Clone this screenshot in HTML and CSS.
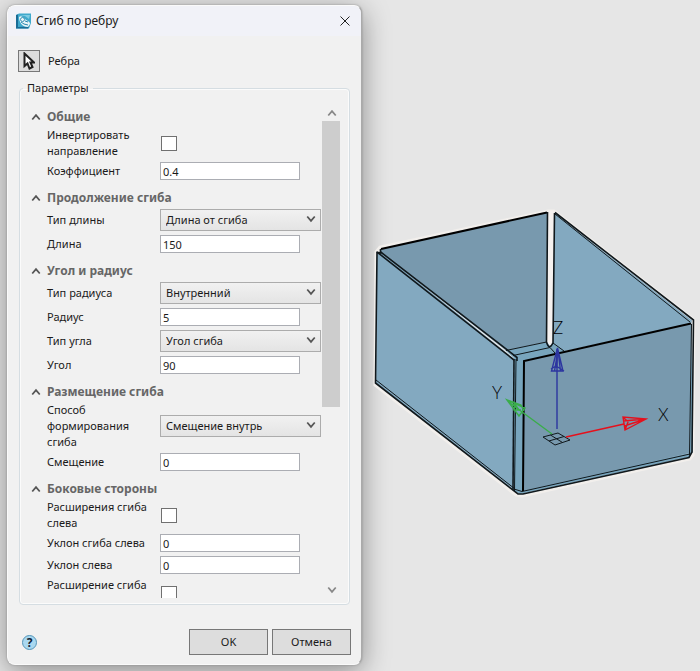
FILE: index.html
```html
<!DOCTYPE html>
<html lang="ru">
<head>
<meta charset="utf-8">
<title>Сгиб по ребру</title>
<link rel="stylesheet" href="styles.css">
</head>
<body>
<main class="workspace">
  <form class="dialog">
    <header class="titlebar">
      <svg class="app-icon" viewBox="0 0 15 16" aria-hidden="true">
        <path d="M0 2L3 .5H15V10L13 15.500H0Z" fill="#3fa9cc"/>
        <path d="M0 2L2 1.500V14L13 13.500L12 15.500H0Z" fill="#1a6c96"/>
        <path d="M3 2H14L13 6L9 3Z" fill="#7fcbe2"/>
        <path d="M3 4C5 2 7 4 9 6S14 8 14 11L12 14C6 14 3 9 3 4Z" fill="#e9f5f8"/>
        <circle cx="6.500" cy="6.500" r="2" fill="none" stroke="#3d92b5"/>
        <path d="M5 9L8 11L12 12M9 8L12 9" stroke="#2786ae" fill="none"/>
      </svg>
      <h1 class="title">Сгиб по ребру</h1>
      <button class="close" type="button" aria-label="Закрыть">
        <svg viewBox="0 0 10 10"><path d="M.5.5L9.500 9.500M9.500.5L.5 9.500"/></svg>
      </button>
    </header>

    <div class="picker">
      <button class="pick" type="button" id="pick" aria-label="Ребра">
        <svg viewBox="0 0 12 18"><path d="M1.500 1.500V14L4.500 11.500L6.500 16.500L9.500 15L7.500 10.500H11Z"/></svg>
      </button>
      <label for="pick">Ребра</label>
    </div>

    <fieldset class="params">
      <legend>Параметры</legend>
      <div class="list">
        <section class="group">
          <button class="group-head" type="button"><svg class="chev" viewBox="0 0 8 6"><path d="M1 5L4 1.500L7 5"/></svg>Общие</button>
          <div class="row"><label for="inv">Инвертировать направление</label><input class="check" type="checkbox" id="inv"></div>
          <div class="row"><label for="coef">Коэффициент</label><input class="text" type="text" id="coef" value="0.4"></div>
        </section>
        <section class="group">
          <button class="group-head" type="button"><svg class="chev" viewBox="0 0 8 6"><path d="M1 5L4 1.500L7 5"/></svg>Продолжение сгиба</button>
          <div class="row"><label for="lt">Тип длины</label><span class="combo"><select id="lt"><option>Длина от сгиба</option></select><svg class="chev" viewBox="0 0 8 6"><path d="M1 1L4 4.500L7 1"/></svg></span></div>
          <div class="row"><label for="len">Длина</label><input class="text" type="text" id="len" value="150"></div>
        </section>
        <section class="group">
          <button class="group-head" type="button"><svg class="chev" viewBox="0 0 8 6"><path d="M1 5L4 1.500L7 5"/></svg>Угол и радиус</button>
          <div class="row"><label for="rt">Тип радиуса</label><span class="combo"><select id="rt"><option>Внутренний</option></select><svg class="chev" viewBox="0 0 8 6"><path d="M1 1L4 4.500L7 1"/></svg></span></div>
          <div class="row"><label for="rad">Радиус</label><input class="text" type="text" id="rad" value="5"></div>
          <div class="row"><label for="at">Тип угла</label><span class="combo"><select id="at"><option>Угол сгиба</option></select><svg class="chev" viewBox="0 0 8 6"><path d="M1 1L4 4.500L7 1"/></svg></span></div>
          <div class="row"><label for="ang">Угол</label><input class="text" type="text" id="ang" value="90"></div>
        </section>
        <section class="group">
          <button class="group-head" type="button"><svg class="chev" viewBox="0 0 8 6"><path d="M1 5L4 1.500L7 5"/></svg>Размещение сгиба</button>
          <div class="row"><label for="fm">Способ формирования сгиба</label><span class="combo"><select id="fm"><option>Смещение внутрь</option></select><svg class="chev" viewBox="0 0 8 6"><path d="M1 1L4 4.500L7 1"/></svg></span></div>
          <div class="row"><label for="off">Смещение</label><input class="text" type="text" id="off" value="0"></div>
        </section>
        <section class="group">
          <button class="group-head" type="button"><svg class="chev" viewBox="0 0 8 6"><path d="M1 5L4 1.500L7 5"/></svg>Боковые стороны</button>
          <div class="row"><label for="el">Расширения сгиба слева</label><input class="check" type="checkbox" id="el"></div>
          <div class="row"><label for="sbl">Уклон сгиба слева</label><input class="text" type="text" id="sbl" value="0"></div>
          <div class="row"><label for="sl">Уклон слева</label><input class="text" type="text" id="sl" value="0"></div>
          <div class="row"><label for="er">Расширение сгиба<br>&nbsp;</label><input class="check" type="checkbox" id="er"></div>
        </section>
      </div>
      <div class="scrollbar" aria-hidden="true">
        <svg class="chev" viewBox="0 0 8 6"><path d="M1 5L4 1.500L7 5"/></svg>
        <div class="track"><div class="thumb"></div></div>
        <svg class="chev" viewBox="0 0 8 6"><path d="M1 1L4 4.500L7 1"/></svg>
      </div>
    </fieldset>

    <footer class="actions">
      <button class="help" type="button">?</button>
      <button class="btn" type="button">OK</button>
      <button class="btn" type="button">Отмена</button>
    </footer>
  </form>

  <svg class="scene" viewBox="364 0 336 671" role="img" aria-label="Модель">
    <!-- inner faces -->
    <path class="halo" d="M376 252L380 247L548 211L554 211L694 320L693 455L690 459L522 496L516 495L375 385Z"/>
    <path class="gap" d="M548 211H554.500L552.500 341L549 346L547 341Z"/>
    <path class="floor" d="M505 350L547 342L550 346L553 342L566 351L524 362V491L514 489V358Z"/>
    <path class="dark" d="M381 249L547 212.500L546.500 342L506 350.500L381 252Z"/>
    <path class="light" d="M554.500 213L692 320.500L691 324L565 351L553 343Z"/>
    <path class="line" d="M506 350.500L546.500 342M513 355.500L550 347.500M553 343L564 351M550 347.500L555 353"/>
    <path class="edge" d="M381 249L547 212.500"/>
    <path class="line bold" d="M547.500 212L546.500 342Q549 351 553 343L554.500 213"/>
    <!-- outer faces -->
    <path class="light" d="M377 253L381 252L514 359V490L376 383Z"/>
    <path class="floor" d="M513 490L689 453L692 320L693 452L689 457L520 494Z"/>
    <path class="dark" d="M524 361L691.500 323.500L689.500 453L523 491Z"/>
    <path class="line bold" d="M380.500 249V253L377 252.500L375.500 383L518 494H523L689 457.500L692 452L693.500 320L555 212.500"/>
    <path class="line bold" d="M377 252L514 360M380 251.500L517 357.500V361"/>
    <path class="line" d="M555 214L690 322M376 380L515 489M516 359L514.500 491"/>
    <path class="line bold" d="M514 359L513 490"/>
    <path class="edge" d="M523 491L524 361L691 323.500"/>
    <path class="line" d="M691.500 324L689.500 455M514 489L522 491.500L690 454"/>
    <!-- axes -->
    <path class="line" d="M543 437L558 433L570 440L555 445ZM549 441L564 436.500M550.500 435L562.500 442.500"/>
    <g class="axis-z"><path d="M557 429V349"/><path d="M557.500 348L551.500 371H563ZM558 350L554.500 371M558 350L560.500 371M557.500 350L556.500 368M551 369L556 366L564 371"/></g>
    <g class="axis-y"><path d="M552 434L518 409"/><path d="M507 400L525 408L519 416ZM507 400L521 405L524 411M509 402L519 410L514 403L514 410L521 410"/></g>
    <g class="axis-x"><path d="M566 437L624 424"/><path d="M646 419L623 417L625 430ZM646 419L623 421M646 419L624 426M623 417L628 422L625 430"/></g>
    <text class="axis-label" x="553" y="334">Z</text>
    <text class="axis-label" x="492" y="399">Y</text>
    <text class="axis-label" x="658" y="421">X</text>
  </svg>
</main>
</body>
</html>
```
FILE: styles.css
```css
* {
  box-sizing: border-box;
}

body {
  margin: 0;
  background: #e6e6e6;
  color: #1a1a1a;
  font: 11px/16px "Noto Sans", "Open Sans", sans-serif;
}

button, input, select {
  font: inherit;
  color: inherit;
  margin: 0;
  padding: 0;
  border-radius: 0;
}

svg {
  display: block;
  fill: none;
}

.workspace {
  display: grid;
  grid-template-columns: 52fr 48fr;
  height: 100vh;
  overflow: hidden;
}

.dialog {
  display: flex;
  flex-direction: column;
  min-height: 0;
  margin: 5px 2px 6px 7px;
  background: #f1f1f1;
  border: 1px solid #fafafa;
  border-right-color: #aaa;
  border-radius: 8px;
  overflow: hidden;
  box-shadow: 0 0 2px #888, 0 6px 28px rgba(0, 0, 0, 0.4);
}

.titlebar {
  display: flex;
  align-items: center;
  gap: 5px;
  height: 30px;
  flex: none;
  padding: 0 11px 0 8px;
  background: #f1f2f8;
}

.app-icon {
  width: 15px;
  height: 16px;
}

.title {
  flex: 1;
  margin: 0;
  font-size: 12px;
  font-weight: 400;
}

.close {
  border: 0;
  background: none;
}

.close svg {
  width: 10px;
  height: 10px;
  stroke: #222;
}

.picker {
  display: flex;
  align-items: center;
  gap: 8px;
  padding: 14px 0 0 10px;
}

.pick {
  display: grid;
  place-items: center;
  width: 22px;
  height: 22px;
  border: 1px solid #777;
  background: #ddd;
}

.pick svg {
  width: 12px;
  height: 18px;
  stroke: #222;
  stroke-width: 2;
  fill: #fff;
}

.params {
  display: flex;
  flex: 1;
  min-height: 0;
  margin: 8px 11px 0 11px;
  padding: 8px 8px 6px 11px;
  border: 1px solid #d5dde2;
  border-radius: 4px;
  box-shadow: inset 0 0 0 1px #fbfbfb;
}

.params legend {
  margin-left: -8px;
  padding: 0 4px;
}

.list {
  flex: 1;
  min-width: 0;
  overflow: hidden;
  padding-top: 4px;
}

.group + .group {
  margin-top: 7px;
}

.group-head {
  display: flex;
  align-items: center;
  gap: 6px;
  height: 18px;
  border: 0;
  background: none;
  color: #666;
  font-size: 12px;
  font-weight: 700;
}

.chev {
  width: 10px;
  height: 8px;
  stroke: #555;
  stroke-width: 1.4px;
}

.row {
  display: grid;
  grid-template-columns: 113px 1fr;
  align-items: center;
  padding: 1px 1px 1px 16px;
}

.row label {
  padding-right: 10px;
}

.text {
  width: 140px;
  height: 18px;
  margin: 1px 0;
  padding: 0 2px;
  border: 1px solid #abadb3;
  background: #fff;
}

.check {
  appearance: none;
  width: 16px;
  height: 15px;
  margin-left: 1px;
  border: 1px solid #707070;
  background: #fff;
}

.combo {
  position: relative;
  display: block;
  margin: 1px 0;
}

.combo select {
  appearance: none;
  display: block;
  width: 100%;
  height: 22px;
  padding: 0 5px;
  border: 1px solid #acacac;
  background: linear-gradient(#f1f1f1, #e4e4e4);
}

.combo .chev {
  position: absolute;
  right: 5px;
  top: 6px;
}

.scrollbar {
  display: flex;
  flex-direction: column;
  align-items: center;
  flex: none;
  width: 19px;
  padding: 5px 0 4px;
}

.scrollbar .chev {
  flex: none;
  stroke: #888;
}

.track {
  flex: 1;
  align-self: stretch;
  padding: 4px 1px 4px 0;
}

.thumb {
  height: 62%;
  background: #cdcdcd;
}

.actions {
  display: flex;
  align-items: center;
  gap: 4px;
  padding: 24px 10px 9px 14px;
}

.btn {
  width: 79px;
  height: 26px;
  border: 1px solid #777;
  background: #ddd;
}

.help {
  width: 15px;
  height: 15px;
  margin-right: auto;
  border: 1px solid #5595b8;
  border-radius: 50%;
  background: #a9d8f0;
  color: #123;
  font-size: 12px;
  font-weight: 700;
  line-height: 13px;
}

.scene {
  width: 100%;
  height: 100%;
  min-height: 0;
}

.halo {
  stroke: #f2efec;
  stroke-width: 3px;
}

.gap {
  fill: #f5f1ef;
}

.dark {
  fill: #7899ae;
}

.light {
  fill: #83a9c0;
}

.floor {
  fill: #78a5bd;
}

.line, .edge {
  stroke: #10181c;
  stroke-width: 1px;
}

.bold {
  stroke-width: 1.6px;
}

.edge {
  stroke: #000;
  stroke-width: 2px;
}

.axis-x {
  stroke: #e5101c;
}

.axis-y {
  stroke: #3aad4a;
}

.axis-z {
  stroke: #2c35a0;
}

.axis-x, .axis-y, .axis-z {
  stroke-width: 1.4px;
}

.axis-label {
  fill: #000;
  font: 300 17px Lato, sans-serif;
}
```
